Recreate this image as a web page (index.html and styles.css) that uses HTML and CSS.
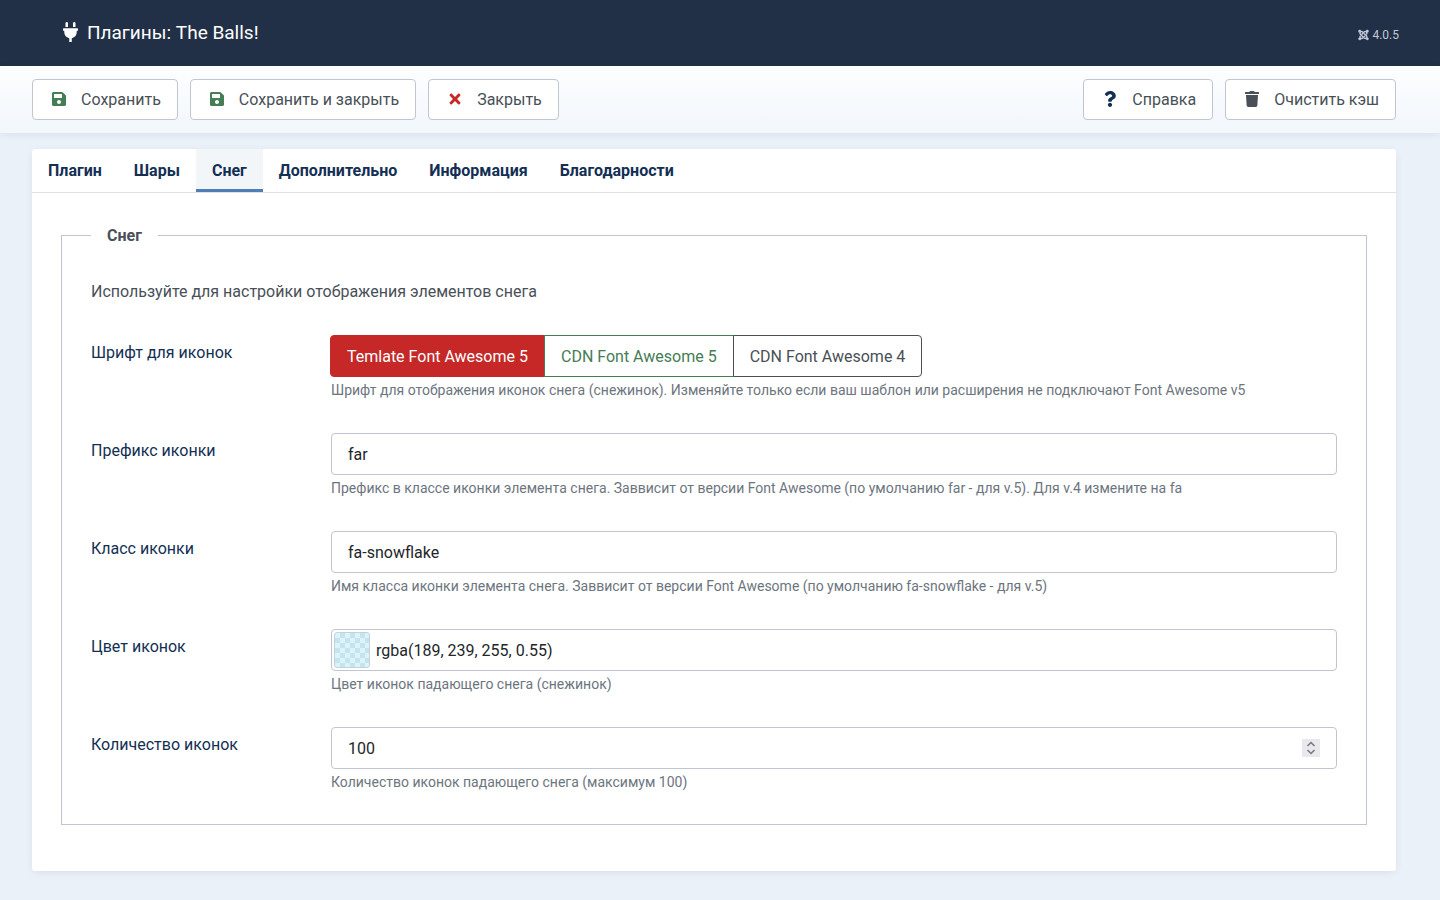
FILE: index.html
```html
<!DOCTYPE html>
<html lang="ru">
<head>
<meta charset="utf-8">
<meta name="viewport" content="width=device-width, initial-scale=1">
<title>Плагины: The Balls!</title>
<link rel="stylesheet" href="styles.css">
</head>
<body>
<svg class="sprite" aria-hidden="true">
  <symbol id="save" viewBox="0 0 448 512"><path d="M433.941 129.941l-83.882-83.882A48 48 0 0 0 316.118 32H48C21.49 32 0 53.49 0 80v352c0 26.51 21.49 48 48 48h352c26.51 0 48-21.49 48-48V163.882a48 48 0 0 0-14.059-33.941zM224 416c-35.346 0-64-28.654-64-64 0-35.346 28.654-64 64-64s64 28.654 64 64c0 35.346-28.654 64-64 64zm96-304.52V212c0 6.627-5.373 12-12 12H76c-6.627 0-12-5.373-12-12V108c0-6.627 5.373-12 12-12h228.52c3.183 0 6.235 1.264 8.485 3.515l3.48 3.48A11.996 11.996 0 0 1 320 111.48z"/></symbol>
</svg>
<header class="header">
  <h1 class="header-title">
    <svg class="icon-plug" viewBox="0 0 384 512" aria-hidden="true"><path d="M320,32a32,32,0,0,0-64,0v96h64Zm48,128H16A16,16,0,0,0,0,176v32a16,16,0,0,0,16,16H32v32A160.07,160.07,0,0,0,160,412.8V512h64V412.8A160.07,160.07,0,0,0,352,256V224h16a16,16,0,0,0,16-16V176A16,16,0,0,0,368,160ZM128,32a32,32,0,0,0-64,0v96h64Z"/></svg>
    <span>Плагины: The Balls!</span>
  </h1>
  <div class="version">
    <svg class="icon-joomla" viewBox="0 0 448 512" aria-hidden="true"><path d="M.6 92.1C.6 58.8 27.4 32 60.4 32c30 0 54.5 21.9 59.2 50.2 32.6-7.6 67.1.6 96.5 30l-44.3 44.3c-20.5-20.5-42.6-16.3-55.4-3.5-14.3 14.3-14.3 37.9 0 52.2l99.5 99.5-44 44.3c-87.7-87.2-49.7-49.7-99.8-99.7-26.8-26.5-35-64.8-24.8-98.9C20.4 144.6.6 120.7.6 92.1zm129.5 116.4l44.3 44.3c10-10 89.7-89.7 99.7-99.8 14.3-14.3 37.6-14.3 51.9 0 12.8 12.8 17 35-3.5 55.4l44 44.3c31.2-31.2 38.5-67.6 28.9-101.2 29.2-4.1 51.9-29.2 51.9-59.5 0-33.2-26.8-60.1-59.8-60.1-30.3 0-55.4 22.5-59.5 51.6-33.8-9.9-71.7-1.5-98.3 25.1-18.3 19.1-71.1 71.5-99.6 99.9zm266.3 152.2c8.2-32.7-.9-68.5-26.3-93.9-11.8-12.2 5 4.7-99.5-99.7l-44.3 44.3 99.7 99.7c14.3 14.3 14.3 37.6 0 51.9-12.8 12.8-35 17-55.4-3.5l-44 44.3c27.6 30.2 68 38.8 102.7 28 5.5 27.4 29.7 48.1 58.9 48.1 33 0 59.8-26.8 59.8-60.1 0-30.2-22.5-55-51.6-59.1zm-84.3-53.1l-44-44.3c-87 86.4-50.4 50.4-99.7 99.8-14.3 14.3-37.6 14.3-51.9 0-13.1-13.4-16.9-35.3 3.2-55.4l-44-44.3c-30.2 30.2-38 65.2-29.5 98.3-26.7 6-46.2 29.9-46.2 58.2C0 453.2 26.8 480 59.8 480c28.6 0 52.5-19.8 58.6-46.7 32.7 8.2 68.5-.6 94.2-26 32.1-32 12.2-12.4 99.5-99.7z"/></svg>
    <span>4.0.5</span>
  </div>
</header>

<div class="toolbar">
  <button type="button" class="btn"><svg class="btn-icon green" aria-hidden="true"><use href="#save"/></svg>Сохранить</button>
  <button type="button" class="btn"><svg class="btn-icon green" aria-hidden="true"><use href="#save"/></svg>Сохранить и закрыть</button>
  <button type="button" class="btn"><svg class="btn-icon red" viewBox="0 0 352 512" aria-hidden="true"><path d="M242.72 256l100.07-100.07c12.28-12.28 12.28-32.19 0-44.48l-22.24-22.24c-12.28-12.28-32.19-12.28-44.48 0L176 189.28 75.93 89.21c-12.28-12.28-32.19-12.28-44.48 0L9.21 111.45c-12.28 12.28-12.28 32.19 0 44.48L109.28 256 9.21 356.07c-12.28 12.28-12.28 32.19 0 44.48l22.24 22.24c12.28 12.28 32.2 12.28 44.48 0L176 322.72l100.07 100.07c12.28 12.28 32.2 12.28 44.48 0l22.24-22.24c12.28-12.28 12.28-32.19 0-44.48L242.72 256z"/></svg>Закрыть</button>
  <button type="button" class="btn push"><svg class="btn-icon navy" viewBox="0 0 384 512" aria-hidden="true"><path d="M202.021 0C122.202 0 70.503 32.703 29.914 91.026c-7.363 10.58-5.093 25.086 5.178 32.874l43.138 32.709c10.373 7.865 25.132 6.026 33.253-4.148 25.049-31.381 43.63-49.449 82.757-49.449 30.764 0 68.816 19.799 68.816 49.631 0 22.552-18.617 34.134-48.993 51.164-35.423 19.86-82.299 44.576-82.299 106.405V320c0 13.255 10.745 24 24 24h72.471c13.255 0 24-10.745 24-24v-5.773c0-42.86 125.268-44.645 125.268-160.627C377.504 66.256 286.902 0 202.021 0zM192 373.459c-38.196 0-69.271 31.075-69.271 69.271 0 38.195 31.075 69.27 69.271 69.27s69.271-31.075 69.271-69.271-31.075-69.27-69.271-69.27z"/></svg>Справка</button>
  <button type="button" class="btn"><svg class="btn-icon" viewBox="0 0 448 512" aria-hidden="true"><path d="M432 32H312l-9.4-18.7A24 24 0 0 0 281.1 0H166.8a23.72 23.72 0 0 0-21.4 13.3L136 32H16A16 16 0 0 0 0 48v32a16 16 0 0 0 16 16h416a16 16 0 0 0 16-16V48a16 16 0 0 0-16-16zM53.2 467a48 48 0 0 0 47.9 45h245.8a48 48 0 0 0 47.9-45L416 128H32z"/></svg>Очистить кэш</button>
</div>

<main class="card">
  <div class="tabs" role="tablist">
    <button type="button" class="tab" role="tab">Плагин</button>
    <button type="button" class="tab" role="tab">Шары</button>
    <button type="button" class="tab active" role="tab" aria-selected="true">Снег</button>
    <button type="button" class="tab" role="tab">Дополнительно</button>
    <button type="button" class="tab" role="tab">Информация</button>
    <button type="button" class="tab" role="tab">Благодарности</button>
  </div>
  <form class="panel">
    <fieldset class="options">
      <legend class="legend">Снег</legend>
      <p class="intro">Используйте для настройки отображения элементов снега</p>

      <div class="row">
        <span class="label" id="font-label">Шрифт для иконок</span>
        <div class="field">
          <div class="switch" role="radiogroup" aria-labelledby="font-label">
            <input type="radio" name="font" id="font0" checked><label class="option option-red" for="font0">Temlate Font Awesome 5</label>
            <input type="radio" name="font" id="font1"><label class="option option-green" for="font1">CDN Font Awesome 5</label>
            <input type="radio" name="font" id="font2"><label class="option" for="font2">CDN Font Awesome 4</label>
          </div>
          <small class="help">Шрифт для отображения иконок снега (снежинок). Изменяйте только если ваш шаблон или расширения не подключают Font Awesome v5</small>
        </div>
      </div>

      <div class="row">
        <label class="label" for="prefix">Префикс иконки</label>
        <div class="field">
          <input class="input" type="text" id="prefix" value="far">
          <small class="help">Префикс в классе иконки элемента снега. Заввисит от версии Font Awesome (по умолчанию far - для v.5). Для v.4 измените на fa</small>
        </div>
      </div>

      <div class="row">
        <label class="label" for="class">Класс иконки</label>
        <div class="field">
          <input class="input" type="text" id="class" value="fa-snowflake">
          <small class="help">Имя класса иконки элемента снега. Заввисит от версии Font Awesome (по умолчанию fa-snowflake - для v.5)</small>
        </div>
      </div>

      <div class="row">
        <label class="label" for="color">Цвет иконок</label>
        <div class="field">
          <div class="control">
            <input class="input input-color" type="text" id="color" value="rgba(189, 239, 255, 0.55)">
            <span class="swatch"></span>
          </div>
          <small class="help">Цвет иконок падающего снега (снежинок)</small>
        </div>
      </div>

      <div class="row">
        <label class="label" for="count">Количество иконок</label>
        <div class="field">
          <div class="control">
            <input class="input" type="number" id="count" value="100" max="100">
            <svg class="spinner" viewBox="0 0 18 18" aria-hidden="true"><path d="M5.5 7 9 3.5 12.5 7M5.5 11 9 14.5 12.5 11"/></svg>
          </div>
          <small class="help">Количество иконок падающего снега (максимум 100)</small>
        </div>
      </div>
    </fieldset>
  </form>
</main>
</body>
</html>
```
FILE: styles.css
```css
* { box-sizing: border-box; }

body {
  margin: 0;
  background: #ebf1f8;
  color: #495057;
  font: 16px/24px Roboto, "Noto Sans", sans-serif;
}

button, input { font: inherit; }

.sprite { display: none; }

.header {
  display: flex;
  align-items: center;
  justify-content: space-between;
  height: 66px;
  padding: 0 41px 0 63px;
  background: #213047;
  color: #fff;
}

.header-title {
  display: flex;
  align-items: flex-start;
  gap: 9px;
  margin: 0;
  font-size: 19px;
  line-height: 26px;
  font-weight: 400;
}

.icon-plug { width: 15px; height: 24px; fill: #fff; }

.version {
  display: flex;
  align-items: center;
  gap: 3px;
  padding-top: 3px;
  color: #c0c8d6;
  font-size: 12px;
}

.icon-joomla { width: 11px; height: 12px; fill: currentColor; }

.toolbar {
  display: flex;
  gap: 12px;
  padding: 13px 44px 13px 32px;
  background: linear-gradient(#fdfeff, #f2f7fc);
  box-shadow: 0 2px 8px rgba(30, 50, 90, 0.08);
}

.btn {
  display: flex;
  align-items: center;
  gap: 12px;
  height: 41px;
  padding: 0 16px;
  border: 1px solid #bfc5d1;
  border-radius: 4px;
  background: #fff;
  color: #495057;
}

.btn-icon { width: 20px; height: 16px; margin-bottom: 1px; fill: currentColor; }
.green { fill: #457d54; }
.red { fill: #c52827; }
.navy { fill: #132f53; }
.push { margin-left: auto; }

.card {
  margin: 16px 44px 29px 32px;
  padding-bottom: 46px;
  border-radius: 3px;
  background: #fff;
  box-shadow: 0 2px 10px -2px rgba(30, 50, 90, 0.12);
}

.tabs {
  display: flex;
  border-bottom: 1px solid #dee2e6;
}

.tab {
  height: 43px;
  padding: 0 16px;
  border: 0;
  background: none;
  color: #132f53;
  font-weight: 700;
}

.active {
  background: #f3f6f9;
  box-shadow: inset 0 -3px #4f80b5;
}

.panel { padding: 30px 29px 0; }

.options {
  margin: 0;
  padding: 32px 29px;
  border: 1px solid #bfc5d1;
}

.legend {
  padding: 1px 16px 0;
  line-height: 24px;
  font-weight: 700;
}

.intro { margin: 0 0 31px; }

.row { display: flex; }
.row + .row { margin-top: 33px; }

.label {
  flex: 0 0 240px;
  padding-top: 6px;
  color: #132f53;
}

.field { flex: 1; min-width: 0; }

.help {
  display: block;
  margin-top: 3px;
  color: #6d757e;
  font-size: 14px;
  line-height: 20px;
}

.switch { display: flex; position: relative; }

.switch input {
  position: absolute;
  opacity: 0;
}

.option {
  height: 42px;
  margin-left: -1px;
  padding: 9px 16px 7px;
  border: 1px solid #495057;
  background: #fff;
}

.option:last-child { border-radius: 0 4px 4px 0; }
.option-green { border-color: #457d54; color: #457d54; }

.option-red {
  border-color: #c52827;
  border-radius: 4px 0 0 4px;
  background: #c52827;
  color: #fff;
}

.control { position: relative; }

.input {
  display: block;
  width: 100%;
  height: 42px;
  padding: 0 16px;
  border: 1px solid #bfc5d1;
  border-radius: 4px;
  background: #fff;
  color: #22262a;
  appearance: textfield;
}

.input::-webkit-inner-spin-button { display: none; }
.input-color { padding-left: 44px; }

.swatch {
  position: absolute;
  top: 3px;
  left: 3px;
  width: 36px;
  height: 36px;
  border: 1px solid #c3d3dc;
  border-radius: 3px;
  background: repeating-conic-gradient(#c5e4ed 0 25%, #dbf4fb 0 50%) 0 0 / 10px 10px;
}

.spinner {
  position: absolute;
  top: 12px;
  right: 17px;
  width: 18px;
  height: 18px;
  background: #e9e9ed;
  fill: none;
  stroke: #777782;
  stroke-width: 1.5;
}
```
